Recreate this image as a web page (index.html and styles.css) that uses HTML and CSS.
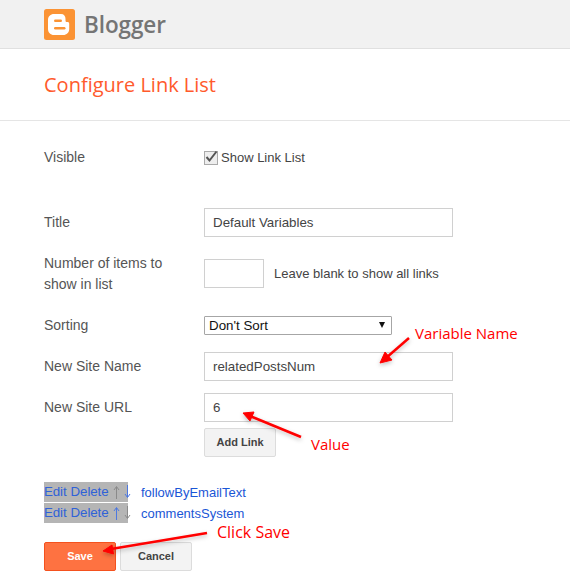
FILE: index.html
```html
<!DOCTYPE html>
<html lang="en">
<head>
<meta charset="utf-8">
<title>Configure Link List</title>
<link rel="stylesheet" href="styles.css">
</head>
<body>
<header class="topbar">
  <svg class="logo" viewBox="0 0 31 31" width="31" height="31" aria-hidden="true">
    <rect width="31" height="31" rx="2.5" fill="#fb9334"/>
    <path fill="#fff" fill-rule="evenodd" d="M10 5h7c3 0 4.500 2 4.500 5v1.500c0 1 .5 1.500 1.500 1.500h.5c1 0 1.700.6 1.700 1.700V20c0 3.500-2.500 6-6 6H10c-3.500 0-6-2.500-6-6V11c0-3.500 2.500-6 6-6z"/>
    <rect x="10" y="10.500" width="8" height="2.500" rx="1.200" fill="#fb9334"/>
    <rect x="10" y="18" width="11.500" height="2.500" rx="1.200" fill="#fb9334"/>
  </svg>
  <span class="brand">Blogger</span>
</header>
<section class="heading"><h1>Configure Link List</h1></section>
<main class="content">
  <div class="row row-visible">
    <span class="label">Visible</span>
    <label class="field check"><span class="box"><svg viewBox="0 0 14 14" width="14" height="14" aria-hidden="true"><path d="M2.500 7l3 3.500 7-9" fill="none" stroke="#555" stroke-width="2"/></svg></span>Show Link List</label>
  </div>
  <div class="row row-title">
    <span class="label">Title</span>
    <div class="field"><div class="input">Default Variables</div></div>
  </div>
  <div class="row row-count">
    <span class="label"><span class="wrap">Number of items to show in list</span></span>
    <div class="field inline"><div class="input small"></div><span class="hint">Leave blank to show all links</span></div>
  </div>
  <div class="row row-sort">
    <span class="label">Sorting</span>
    <div class="field"><div class="select">Don't Sort<span class="caret"></span></div></div>
  </div>
  <div class="row row-name">
    <span class="label">New Site Name</span>
    <div class="field"><div class="input">relatedPostsNum</div></div>
  </div>
  <div class="row row-url">
    <span class="label">New Site URL</span>
    <div class="field"><div class="input">6</div></div>
  </div>
  <div class="row row-add">
    <span class="label"></span>
    <div class="field"><button class="btn" type="button">Add Link</button></div>
  </div>
  <ul class="links">
    <li><span class="actions"><a>Edit</a> <a>Delete</a>
      <svg class="arrow off" viewBox="0 0 7 20" width="7" height="20" aria-hidden="true"><path d="M3.500 17V5M1 8l2.500-3.500L6 8"/></svg>
      <svg class="arrow on" viewBox="0 0 7 20" width="7" height="20" aria-hidden="true"><path d="M3.500 3v12M1 12l2.500 3.500L6 12"/></svg>
    </span><a class="name">followByEmailText</a></li>
    <li><span class="actions"><a>Edit</a> <a>Delete</a>
      <svg class="arrow on" viewBox="0 0 7 20" width="7" height="20" aria-hidden="true"><path d="M3.500 17V5M1 8l2.500-3.500L6 8"/></svg>
      <svg class="arrow off" viewBox="0 0 7 20" width="7" height="20" aria-hidden="true"><path d="M3.500 3v12M1 12l2.500 3.500L6 12"/></svg>
    </span><a class="name">commentsSystem</a></li>
  </ul>
  <div class="buttons">
    <button class="btn primary" type="button">Save</button>
    <button class="btn" type="button">Cancel</button>
  </div>
</main>
<svg class="arrows" width="570" height="587" viewBox="0 0 570 587" aria-hidden="true">
  <defs>
    <filter id="sh" x="-20%" y="-20%" width="140%" height="140%"><feDropShadow dx="0" dy="2" stdDeviation="2" flood-color="#000" flood-opacity=".25"/></filter>
  </defs>
  <g filter="url(#sh)" fill="#f00" stroke="#f00">
    <path d="M409 338L386 358" stroke-width="2.500"/><path d="M380 363l5-11 7 8z" stroke-width="1"/>
    <path d="M301 437L250 416" stroke-width="2.500"/><path d="M243 413l11-1-4 9z" stroke-width="1"/>
    <path d="M207 533L111 549" stroke-width="2.500"/><path d="M103 551l9-6 1.500 9z" stroke-width="1"/>
  </g>
</svg>
<span class="note note-name">Variable Name</span>
<span class="note note-value">Value</span>
<span class="note note-save">Click Save</span>
</body>
</html>
```
FILE: styles.css
```css
* { box-sizing: border-box; }
html, body { margin: 0; padding: 0; }
body {
  position: relative;
  width: 570px;
  height: 587px;
  overflow: hidden;
  background: #fff;
  font-family: "Liberation Sans", Arial, sans-serif;
  font-size: 14px;
  color: #555;
}
.topbar {
  display: flex;
  align-items: center;
  gap: 9px;
  height: 49px;
  padding: 0 0 0 44px;
  background: #f1f1f1;
  border-bottom: 1px solid #e0e0e0;
}
.logo { flex: none; }
.brand {
  font-family: "Open Sans", sans-serif;
  font-size: 22.500px;
  font-weight: 600;
  letter-spacing: -0.1px;
  color: #757575;
}
.heading {
  height: 72px;
  padding: 0 44px;
  display: flex;
  align-items: center;
  border-bottom: 1px solid #e5e5e5;
}
.heading h1 {
  margin: 0;
  font-family: "Open Sans", sans-serif;
  font-size: 20px;
  font-weight: 400;
  color: #ff5a2c;
}
.content { padding: 0 44px; }
.row { display: flex; align-items: flex-start; }
.label { flex: none; width: 160px; line-height: 21px; }
.wrap { display: block; width: 130px; }
.field { flex: 1; min-width: 0; }
.row-visible { padding-top: 26px; height: 87px; }
.row-title { height: 51px; }
.row-title .label { padding-top: 4px; }
.row-count { height: 57px; }
.row-count .label { margin-top: -6px; }
.row-sort { height: 36px; }
.row-sort .label { margin-top: -1px; }
.row-name { height: 41px; }
.row-name .label, .row-url .label { padding-top: 4px; }
.row-url { height: 35px; }
.row-add { height: 54px; }
.check {
  display: flex;
  align-items: center;
  gap: 3px;
  font-size: 13px;
  color: #444;
  line-height: 21px;
}
.box {
  width: 14px;
  height: 14px;
  background: #eee;
  border: 1px solid #aaa;
  display: flex;
  align-items: center;
  justify-content: center;
}
.box svg { flex: none; margin-top: -1px; }
.input {
  width: 249px;
  height: 29px;
  padding: 0 8px;
  font-size: 13.330px;
  line-height: 27px;
  border: 1px solid #d0d0d0;
  background: #fff;
  color: #444;
}
.input.small { width: 60px; flex: none; }
.inline { display: flex; align-items: center; gap: 10px; }
.hint { color: #444; font-size: 13px; line-height: 25px; }
.select {
  position: relative;
  width: 188px;
  height: 19px;
  padding-left: 4px;
  font-size: 13.330px;
  line-height: 17px;
  border: 1px solid #a6a6a6;
  border-radius: 1px;
  color: #111;
}
.caret {
  position: absolute;
  right: 6px;
  top: 5px;
  width: 0;
  height: 0;
  border: 3.500px solid transparent;
  border-top: 6px solid #111;
  border-bottom: 0;
}
.btn {
  width: 72px;
  height: 29px;
  padding: 0 0 2px;
  font: bold 11px "Liberation Sans", Arial, sans-serif;
  color: #444;
  background: #f3f3f3;
  border: 1px solid #dcdcdc;
  border-radius: 2px;
}
.links { list-style: none; margin: 0; padding: 0; display: flex; flex-direction: column; gap: 1px; }
.links li { display: flex; align-items: center; height: 20px; }
.actions {
  display: flex;
  gap: 4px;
  width: 84px;
  height: 20px;
  background: #b5b5b5;
  line-height: 20px;
  font-size: 13.330px;
  letter-spacing: -0.1px;
  white-space: nowrap;
}
.links a { color: #2f62d8; }
.arrow { flex: none; fill: none; stroke-width: 1; }
.arrow.on { stroke: #4d78e0; }
.arrow.off { stroke: #8a8a8a; }
.links .name { margin-left: 13px; font-size: 13px; letter-spacing: 0; color: #1a56d6; }
.buttons { display: flex; gap: 4px; margin-top: 19px; }
.btn.primary {
  color: #fff;
  background: #fe7241;
  border-color: #f4511e;
}
.arrows { position: absolute; left: 0; top: 0; pointer-events: none; }
.note {
  position: absolute;
  font-family: "Open Sans", sans-serif;
  font-size: 15px;
  line-height: 20px;
  color: #f00;
}
.note-name { left: 415px; top: 323px; }
.note-value { left: 311px; top: 434px; }
.note-save { left: 217px; top: 522px; font-size: 16px; }
```
